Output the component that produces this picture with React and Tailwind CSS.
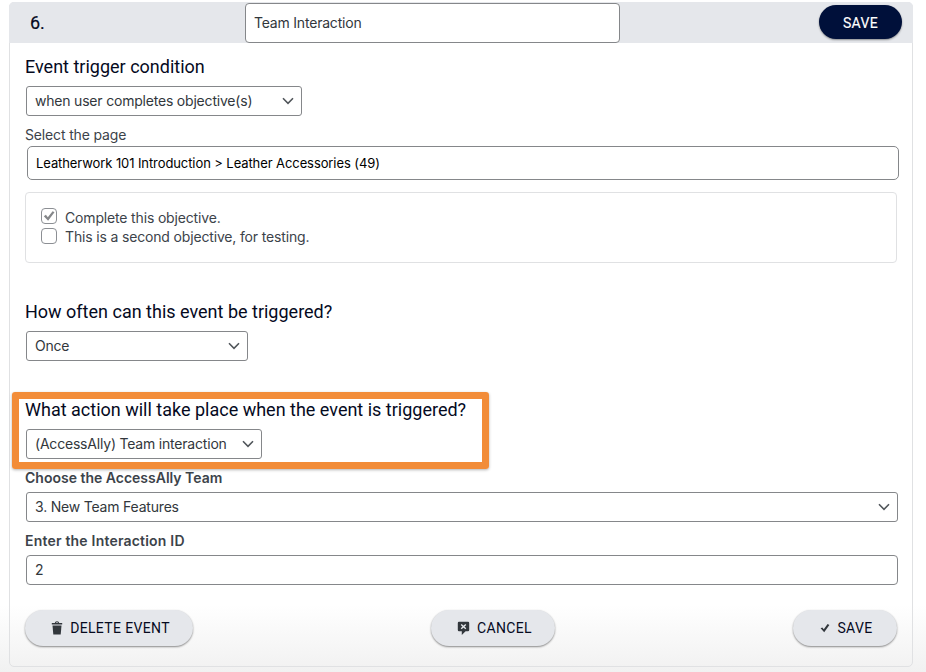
import clsx from "clsx";

function Chevron() {
  return (
    <svg width="12" height="8" viewBox="0 0 12 8" fill="none" className="mt-px shrink-0">
      <path d="M1 1.3 6 6.3 11 1.3" stroke="#50555a" strokeWidth="1.6" />
    </svg>
  );
}

function Heading({ children, className }) {
  return (
    <h3
      className={clsx(
        "h-6 font-['Roboto',sans-serif] text-[18px] leading-6 whitespace-nowrap text-[#050a1e]",
        className
      )}
    >
      {children}
    </h3>
  );
}

function SelectBox({ children, className }) {
  return (
    <button
      type="button"
      className={clsx(
        "ml-px flex h-[30px] items-center justify-between rounded-[3px] border border-[#85878a] bg-white pr-[7px] pb-px pl-2 text-left text-[14px] tracking-[-0.2px] text-[#32373c]",
        className
      )}
    >
      {children}
      <Chevron />
    </button>
  );
}

function Pill({ icon, children, className }) {
  return (
    <button
      type="button"
      className={clsx(
        "flex h-[36px] items-center justify-center rounded-full bg-[#e5e7eb] pl-[3px] font-['Roboto',sans-serif] text-[14px] tracking-[0.35px] text-[#050a1e] shadow-[0_1px_2px_rgba(0,0,0,0.45)]",
        className
      )}
    >
      {icon}
      {children}
    </button>
  );
}

function Checkbox({ checked, children }) {
  return (
    <label className="flex h-5 items-start">
      <span className="flex h-4 w-4 items-center justify-center rounded-[4px] border border-[#8c8f94] bg-white">
        {checked && (
          <svg width="12" height="12" viewBox="0 0 12 12" className="shrink-0">
            <path d="M.8 6.2 2.9 4.8 4.8 7.2 9.6 1.2 11.5 2.3 5.1 10.7Z" fill="#85878a" />
          </svg>
        )}
      </span>
      <span
        className={clsx(
          "ml-2 text-[14px] tracking-[-0.16px] text-[#3c434a]",
          checked ? "leading-5" : "leading-[18px]"
        )}
      >
        {children}
      </span>
    </label>
  );
}

const trashIcon = (
  <svg width="12" height="14" viewBox="0 0 12 14" className="mr-[7px]" fill="#32373c">
    <path d="M3.8 1.9Q3.9 .3 6 .3T8.2 1.9H11.2V3.6H.8V1.9ZM4.9 1.9H7.1Q7 1.2 6 1.2T4.9 1.9Z" />
    <path d="M1.5 4.4H10.5L9.7 13.4H2.3Z" />
  </svg>
);

const cancelIcon = (
  <svg width="13" height="15" viewBox="0 0 13 15" className="mr-[7px]">
    <path d="M2 .8H11Q12.2 .8 12.2 2V9Q12.2 10.2 11 10.2H8.6L4.8 14V10.2H2Q.8 10.2 .8 9V2Q.8 .8 2 .8Z" fill="#32373c" />
    <path d="M4.2 3.4 8.8 7.8M8.8 3.4 4.2 7.8" stroke="#e5e7eb" strokeWidth="1.4" />
  </svg>
);

const checkIcon = (
  <svg width="10" height="10" viewBox="0 0 10 10" className="mr-[7px]">
    <path d="M.6 5.3 2.3 4.4 3.8 6.2 7.6 1 9.4 1.9 4.2 9.2Z" fill="#32373c" />
  </svg>
);

export default function App() {
  return (
    <div className="h-[672px] w-[926px] overflow-hidden bg-linear-to-b from-white from-90% to-[#f1f1f1] pt-[2px] pl-[9px] font-['Inter',sans-serif]">
      <div className="flex h-[665px] w-[904px] flex-col rounded-[5px] border border-[#e0e1e3]">
        {/* Title bar */}
        <div className="-mx-px -mt-px flex h-[41px] shrink-0 items-start rounded-t-[5px] bg-[#e5e7eb] pr-[11px]">
          <span className="w-[236px] pl-[21px] font-['Roboto',sans-serif] text-[18px] leading-[41px] text-[#050a1e] [-webkit-text-stroke:0.2px_#050a1e]">
            6.
          </span>
          <input
            className="mt-px h-10 w-[375px] rounded-[4px] border border-[#85878a] bg-white px-2 pb-0.5 text-[14px] tracking-[-0.2px] text-[#32373c]"
            defaultValue="Team Interaction"
          />
          <button
            type="button"
            className="mt-[3px] ml-auto h-[34px] w-[83px] rounded-full bg-[#00103a] pt-0.5 font-['Roboto',sans-serif] text-[14px] tracking-[0.35px] text-white shadow-[0_1px_2px_rgba(0,0,0,0.4)] [-webkit-text-stroke:0.15px_#fff]"
          >
            SAVE
          </button>
        </div>

        <div className="flex flex-col pt-3 pl-[15px]">
          {/* Trigger */}
          <Heading>Event trigger condition</Heading>
          <SelectBox className="mt-[7px] w-[276px]">when user completes objective(s)</SelectBox>
          <span className="mt-[9px] h-5 text-[14px] leading-5 tracking-[-0.15px] text-[#3c434a]">
            Select the page
          </span>
          <input
            className="mt-px ml-[2px] h-[34px] w-[872px] rounded-[5px] border border-[#85878a] bg-white px-2 text-[13px] tracking-[-0.09px] text-black"
            defaultValue="Leatherwork 101 Introduction > Leather Accessories (49)"
          />
          <div className="mt-3 h-[71px] w-[872px] rounded-[4px] border border-[#e0e1e3] pt-[15px] pl-[15px]">
            <Checkbox checked>Complete this objective.</Checkbox>
            <Checkbox>This is a second objective, for testing.</Checkbox>
          </div>

          {/* Frequency */}
          <Heading className="mt-[37px]">How often can this event be triggered?</Heading>
          <SelectBox className="mt-[7px] w-[222px]">Once</SelectBox>

          {/* Action */}
          <div className="relative mt-[37px]">
            <Heading>What action will take place when the event is triggered?</Heading>
            <SelectBox className="mt-[7px] w-[236px]">(AccessAlly) Team interaction</SelectBox>
            <div className="pointer-events-none absolute -top-[6px] -left-[13px] h-[77px] w-[477px] rounded-[3px] border-7 border-[#f28c38] shadow-[0_1px_3px_rgba(0,0,0,0.3)]" />
          </div>
          <span className="mt-[9px] h-5 text-[14px] leading-5 font-semibold text-[#3c434a]">
            Choose the AccessAlly Team
          </span>
          <SelectBox className="mt-1 w-[872px]">3. New Team Features</SelectBox>
          <span className="mt-[9px] h-5 text-[14px] leading-5 font-semibold tracking-[0.2px] text-[#3c434a]">
            Enter the Interaction ID
          </span>
          <input
            className="mt-1 ml-px h-[30px] w-[872px] rounded-[4px] border border-[#85878a] bg-white px-2 pb-0.5 text-[14px] text-[#32373c]"
            defaultValue="2"
          />

          {/* Footer */}
          <div className="mt-[25px] flex w-[872px]">
            <Pill icon={trashIcon} className="w-[168px]">DELETE EVENT</Pill>
            <Pill icon={cancelIcon} className="ml-[238px] w-[124px]">CANCEL</Pill>
            <Pill icon={checkIcon} className="ml-auto w-[104px]">SAVE</Pill>
          </div>
        </div>
      </div>
    </div>
  );
}
